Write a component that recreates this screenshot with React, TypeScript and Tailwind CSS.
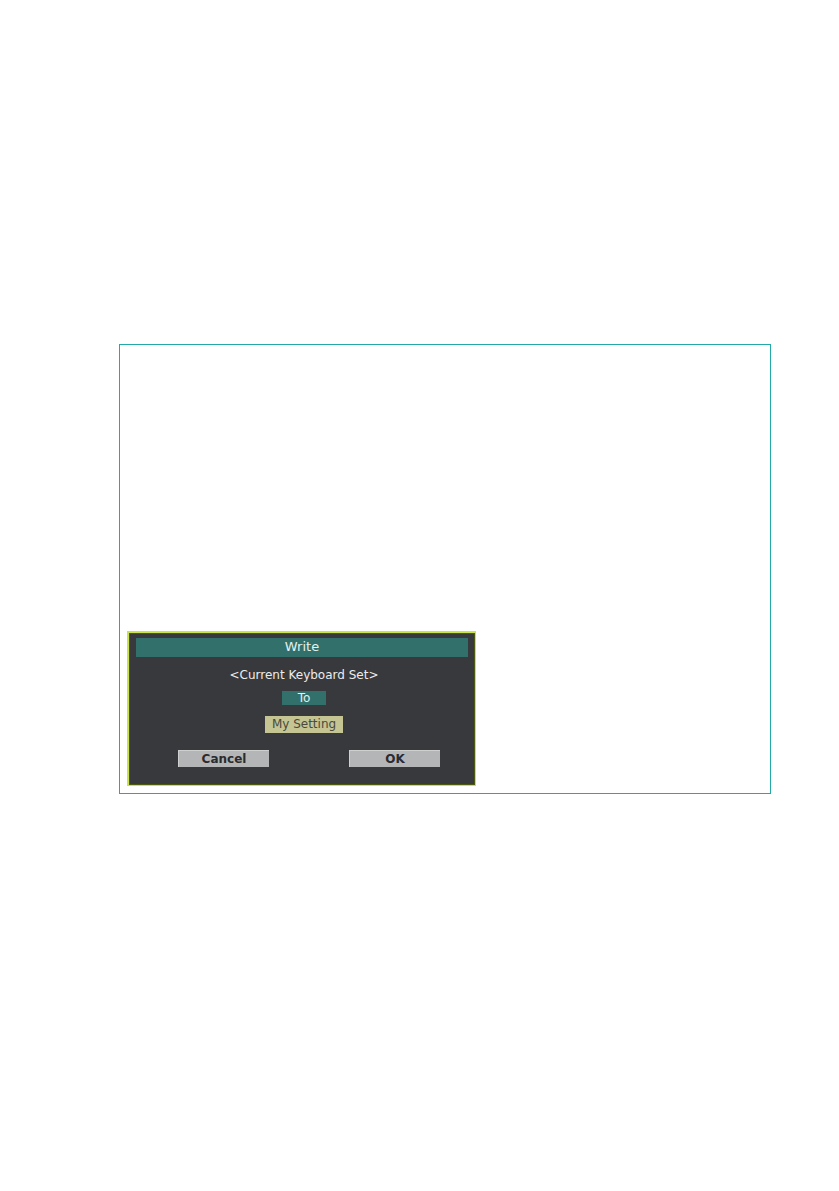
function WriteDialog() {
  return (
    <section
      role="dialog"
      aria-labelledby="write-title"
      className="w-full max-w-[349px] border-t-2 border-r border-b border-l-2 border-[#c8e44a] bg-[#38393c] px-[7px] pt-[5px] pb-[18px] text-[13px] leading-4 shadow-[inset_0_0_0_1px_#4c5a10]"
    >
      <h1 id="write-title" className="bg-[#32706c] pt-px pb-0.5 text-center text-[#e2f2f0]">
        Write
      </h1>
      <div className="flex flex-col items-center pt-[10px] pl-1">
        <p className="text-xs leading-4 text-[#ececec]">&lt;Current Keyboard Set&gt;</p>
        <p className="mt-2 bg-[#32706c] px-4 text-xs leading-[14px] text-[#e2f2f0]">To</p>
        <p className="mt-[11px] bg-[#c5c594] px-[7px] text-xs leading-[17px] text-[#49493c]">My Setting</p>
      </div>
      <div className="mt-[17px] flex justify-between pr-7 pl-[42px]">
        <button
          type="button"
          className="w-[91px] border-t border-l border-[#cfcfcf] bg-[#b4b5b6] text-xs leading-4 font-bold text-[#2b2b2e]"
        >
          Cancel
        </button>
        <button
          type="button"
          className="w-[91px] border-t border-l border-[#cfcfcf] bg-[#b4b5b6] text-xs leading-4 font-bold text-[#2b2b2e]"
        >
          OK
        </button>
      </div>
    </section>
  );
}

export default function App() {
  return (
    <main className="min-h-screen bg-white pt-[344px] pr-[68px] pl-[119px] font-['DejaVu_Sans',sans-serif]">
      <div className="border border-[#22a9a8] px-[7px] pt-[286px] pb-[7px]">
        <WriteDialog />
      </div>
    </main>
  );
}
